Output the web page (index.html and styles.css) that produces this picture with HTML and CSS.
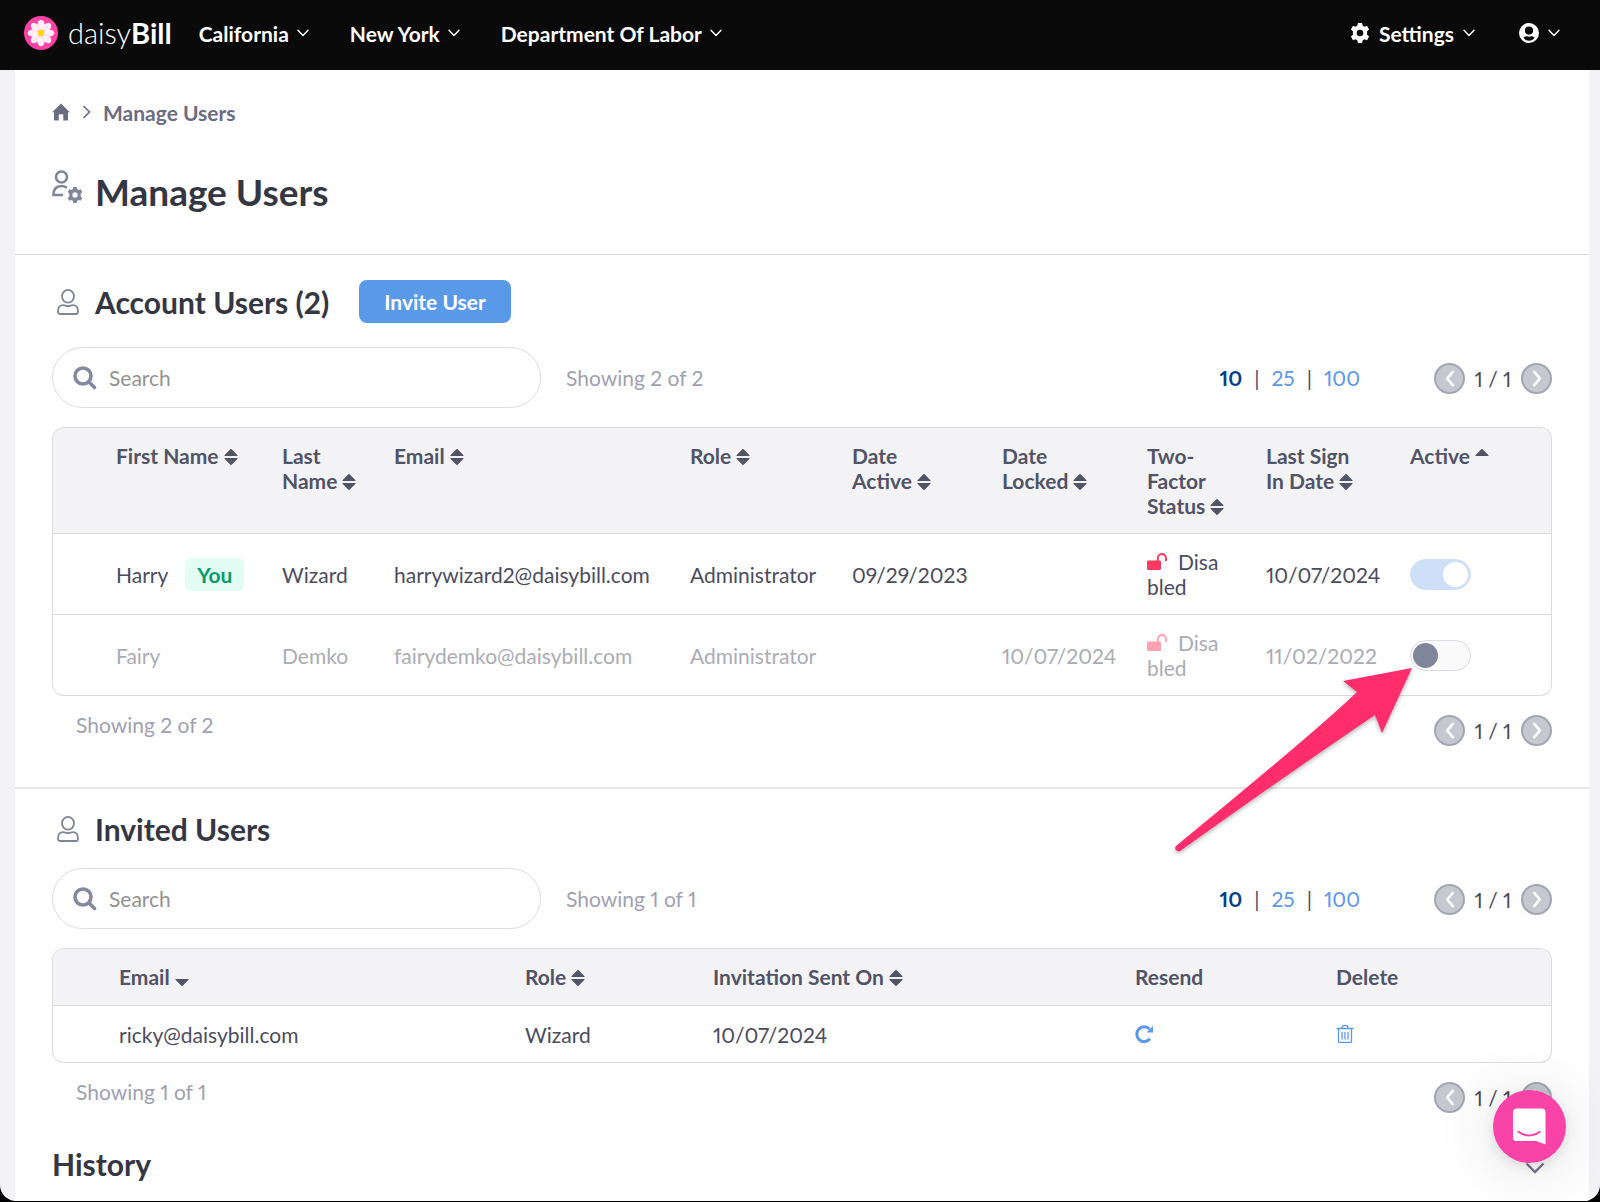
FILE: index.html
```html
<!DOCTYPE html>
<html lang="en">
<head>
<meta charset="utf-8">
<meta name="viewport" content="width=device-width, initial-scale=1">
<title>Manage Users - daisyBill</title>
<link rel="stylesheet" href="styles.css">
</head>
<body>
<svg class="sprite" aria-hidden="true">
  <symbol id="i-down" viewBox="0 0 12 8"><path d="M1 1.2 6 6.6l5-5.4" fill="none" stroke="currentColor" stroke-width="1.4" stroke-linecap="round" stroke-linejoin="round"/></symbol>
  <symbol id="i-gear" viewBox="0 0 20 20"><path fill="currentColor" fill-rule="evenodd" d="M7.900 0h4.200l.5 2.600 1.900 1.100 2.500-.9 2.100 3.600-2 1.800v3.600l2 1.800-2.100 3.600-2.500-.9-1.900 1.100-.5 2.600H7.900l-.5-2.600-1.900-1.100-2.500.9-2.100-3.600 2-1.800V8.200l-2-1.800L3 2.800l2.500.9 1.900-1.100zM10 6.700a3.300 3.300 0 1 0 0 6.600 3.300 3.300 0 0 0 0-6.600z"/></symbol>
  <symbol id="i-person" viewBox="0 0 22 26"><g fill="none" stroke="currentColor" stroke-width="1.800"><ellipse cx="11" cy="7.300" rx="6" ry="6.400"/><path d="M1 22.500c0-4 2-6.300 5.200-6.300 1.600 0 2.800.9 4.800.9s3.200-.9 4.800-.9c3.200 0 5.200 2.300 5.200 6.300 0 1.600-.6 2.500-1.800 2.500H2.800C1.600 25 1 24.100 1 22.500z"/></g></symbol>
  <symbol id="i-search" viewBox="0 0 24 24"><g fill="none" stroke="currentColor" stroke-width="3.600" stroke-linecap="round"><circle cx="10" cy="10" r="8"/><path d="m16 16 5.500 5.500"/></g></symbol>
  <symbol id="i-sort" viewBox="0 0 14 18"><path fill="currentColor" stroke="currentColor" stroke-linejoin="round" d="M7 1.200 13.200 7.500H.8zM7 16.800.8 10.500h12.400z"/></symbol>
  <symbol id="i-sort-up" viewBox="0 0 14 18"><path fill="currentColor" stroke="currentColor" stroke-linejoin="round" d="M7 1.200 13.200 7.500H.8z"/></symbol>
  <symbol id="i-sort-down" viewBox="0 0 14 18"><path fill="currentColor" stroke="currentColor" stroke-linejoin="round" d="M7 16.800.8 10.500h12.400z"/></symbol>
  <symbol id="i-prev" viewBox="0 0 12 18"><path d="M9 2 3 9l6 7" fill="none" stroke="currentColor" stroke-width="2.800" stroke-linecap="round" stroke-linejoin="round"/></symbol>
  <symbol id="i-next" viewBox="0 0 12 18"><path d="m3 2 6 7-6 7" fill="none" stroke="currentColor" stroke-width="2.800" stroke-linecap="round" stroke-linejoin="round"/></symbol>
  <symbol id="i-unlock" viewBox="0 0 20 17"><rect y="7.500" width="14" height="9.500" rx="1.200" fill="currentColor"/><path d="M10.800 8V5.200a4.100 4.100 0 0 1 8.200 0V8" fill="none" stroke="currentColor" stroke-width="2"/></symbol>
</svg>
<div class="page">
  <header class="topbar">
    <a class="brand" href="#">
      <svg class="brand-mark" viewBox="0 0 34 34" aria-hidden="true">
        <circle cx="17" cy="17" r="17" fill="#ff42a5"/>
        <g fill="#fff0fa">
          <g id="petals"><ellipse cx="17" cy="9" rx="3.600" ry="5.300"/><ellipse cx="17" cy="25" rx="3.600" ry="5.300"/><ellipse cx="9" cy="17" rx="5.300" ry="3.600"/><ellipse cx="25" cy="17" rx="5.300" ry="3.600"/></g>
          <use href="#petals" transform="rotate(45 17 17)"/>
        </g>
        <g stroke="#ffc4e5" stroke-width=".8"><path d="m15.500 13.500-2-5M20 15l3-5M20.500 18.500l5 2M18 20.500l2 5M14 19.500l-3 4.500M13.500 15.500l-5-2"/></g>
        <circle cx="17" cy="17" r="3.200" fill="#ffd60a"/>
      </svg>
      <span class="brand-name">daisy<b>Bill</b></span>
    </a>
    <nav class="menu" aria-label="Main">
      <button type="button" class="menu-item">California <svg class="caret"><use href="#i-down"/></svg></button>
      <button type="button" class="menu-item">New York <svg class="caret"><use href="#i-down"/></svg></button>
      <button type="button" class="menu-item">Department Of Labor <svg class="caret"><use href="#i-down"/></svg></button>
    </nav>
    <div class="menu menu-end">
      <button type="button" class="menu-item"><svg class="menu-icon"><use href="#i-gear"/></svg> Settings <svg class="caret"><use href="#i-down"/></svg></button>
      <button type="button" class="menu-item" aria-label="Profile"><svg class="menu-icon" viewBox="0 0 20 20"><path fill="currentColor" fill-rule="evenodd" d="M10 0a10 10 0 1 1 0 20 10 10 0 0 1 0-20zm0 3.500a4.100 4.100 0 1 0 0 8.200 4.100 4.100 0 0 0 0-8.200zM4.400 14.700c1.300 1.900 3.300 3 5.600 3s4.300-1.100 5.600-3c-1.300-1-2.600-1.500-3.400-1.400-1.500.5-2.900.5-4.400 0-.8-.1-2.100.4-3.400 1.400z"/></svg><svg class="caret"><use href="#i-down"/></svg></button>
    </div>
  </header>

  <main class="sheet">
    <div class="intro">
      <nav class="crumbs" aria-label="Breadcrumb">
        <a href="#" aria-label="Home"><svg class="home" viewBox="0 0 18 18"><path fill="currentColor" d="M9 .5 17.800 9.200H16v7.300c0 .6-.4 1-1 1h-3.700v-5.200c0-.6-.4-1-1-1H7.700c-.6 0-1 .4-1 1v5.200H3c-.6 0-1-.4-1-1V9.200H.2z"/></svg></a>
        <svg class="crumb-sep" viewBox="0 0 9 14"><path d="m1.500 1 6 6-6 6" fill="none" stroke="currentColor" stroke-width="1.600"/></svg>
        <a href="#">Manage Users</a>
      </nav>
      <h1 class="title">
        <svg class="title-icon" viewBox="0 0 31 33" aria-hidden="true"><g fill="none" stroke="currentColor" stroke-width="2.600" stroke-linecap="round"><circle cx="9.500" cy="7" r="5.500"/><path d="M10 25H1.500c0-6 3-9 8-9 2 0 3.500.5 4.500 1.300"/></g><svg x="15" y="17" width="16" height="16"><use href="#i-gear"/></svg></svg>
        Manage Users
      </h1>
    </div>

    <section class="block block-ruled">
      <div class="heading">
        <svg class="person" aria-hidden="true"><use href="#i-person"/></svg>
        <h2>Account Users (2)</h2>
        <button type="button" class="invite">Invite User</button>
      </div>
      <div class="tools">
        <label class="search"><svg class="search-icon" aria-hidden="true"><use href="#i-search"/></svg><input type="search" placeholder="Search" aria-label="Search account users"></label>
        <span class="count">Showing 2 of 2</span>
        <div class="sizes"><a href="#" class="current">10</a><span>|</span><a href="#">25</a><span>|</span><a href="#">100</a></div>
        <div class="pager"><button type="button" aria-label="Previous page"><svg><use href="#i-prev"/></svg></button><span>1 / 1</span><button type="button" aria-label="Next page"><svg><use href="#i-next"/></svg></button></div>
      </div>
      <table class="grid accounts">
        <colgroup><col class="c-first"><col class="c-last"><col class="c-email"><col class="c-role"><col class="c-active"><col class="c-locked"><col class="c-factor"><col class="c-sign"><col></colgroup>
        <thead>
          <tr>
            <th scope="col"><button type="button">First Name <svg><use href="#i-sort"/></svg></button></th>
            <th scope="col"><button type="button">Last Name <svg><use href="#i-sort"/></svg></button></th>
            <th scope="col"><button type="button">Email <svg><use href="#i-sort"/></svg></button></th>
            <th scope="col"><button type="button">Role <svg><use href="#i-sort"/></svg></button></th>
            <th scope="col" class="date"><button type="button">Date Active <svg><use href="#i-sort"/></svg></button></th>
            <th scope="col" class="date"><button type="button">Date Locked <svg><use href="#i-sort"/></svg></button></th>
            <th scope="col"><button type="button">Two-Factor Status <svg><use href="#i-sort"/></svg></button></th>
            <th scope="col" class="date"><button type="button">Last Sign In Date <svg><use href="#i-sort"/></svg></button></th>
            <th scope="col"><button type="button">Active <svg><use href="#i-sort-up"/></svg></button></th>
          </tr>
        </thead>
        <tbody>
          <tr>
            <td>Harry <span class="you">You</span></td>
            <td>Wizard</td>
            <td>harrywizard2@daisybill.com</td>
            <td>Administrator</td>
            <td>09/29/2023</td>
            <td></td>
            <td class="factor"><svg class="unlock"><use href="#i-unlock"/></svg>Disabled</td>
            <td>10/07/2024</td>
            <td><input type="checkbox" class="switch" aria-label="Harry Wizard active" checked disabled></td>
          </tr>
          <tr class="inactive">
            <td>Fairy</td>
            <td>Demko</td>
            <td>fairydemko@daisybill.com</td>
            <td>Administrator</td>
            <td></td>
            <td>10/07/2024</td>
            <td class="factor"><svg class="unlock"><use href="#i-unlock"/></svg>Disabled</td>
            <td>11/02/2022</td>
            <td>
              <div class="pointed">
                <input type="checkbox" class="switch" aria-label="Fairy Demko active">
                <svg class="arrow" viewBox="0 0 250 200" aria-hidden="true"><path fill="#ff2d6b" d="M242 8 173 21l14 11Q150 68 6 186c-2 3 0 6 4 5Q125 109 205 55l7 18z"/></svg>
              </div>
            </td>
          </tr>
        </tbody>
      </table>
      <div class="tail">
        <span class="count">Showing 2 of 2</span>
        <div class="pager"><button type="button" aria-label="Previous page"><svg><use href="#i-prev"/></svg></button><span>1 / 1</span><button type="button" aria-label="Next page"><svg><use href="#i-next"/></svg></button></div>
      </div>
    </section>

    <section class="block">
      <div class="heading">
        <svg class="person" aria-hidden="true"><use href="#i-person"/></svg>
        <h2>Invited Users</h2>
      </div>
      <div class="tools">
        <label class="search"><svg class="search-icon" aria-hidden="true"><use href="#i-search"/></svg><input type="search" placeholder="Search" aria-label="Search invited users"></label>
        <span class="count">Showing 1 of 1</span>
        <div class="sizes"><a href="#" class="current">10</a><span>|</span><a href="#">25</a><span>|</span><a href="#">100</a></div>
        <div class="pager"><button type="button" aria-label="Previous page"><svg><use href="#i-prev"/></svg></button><span>1 / 1</span><button type="button" aria-label="Next page"><svg><use href="#i-next"/></svg></button></div>
      </div>
      <table class="grid invited">
        <colgroup><col class="c-mail"><col class="c-kind"><col class="c-sent"><col class="c-resend"><col></colgroup>
        <thead>
          <tr>
            <th scope="col"><button type="button">Email <svg><use href="#i-sort-down"/></svg></button></th>
            <th scope="col"><button type="button">Role <svg><use href="#i-sort"/></svg></button></th>
            <th scope="col"><button type="button">Invitation Sent On <svg><use href="#i-sort"/></svg></button></th>
            <th scope="col">Resend</th>
            <th scope="col">Delete</th>
          </tr>
        </thead>
        <tbody>
          <tr>
            <td>ricky@daisybill.com</td>
            <td>Wizard</td>
            <td>10/07/2024</td>
            <td><button type="button" class="action" aria-label="Resend invitation"><svg viewBox="0 0 18 18"><path d="M15 13.800A7.400 7.400 0 1 1 14.500 4" fill="none" stroke="currentColor" stroke-width="3"/><path fill="currentColor" d="M18 .8v6.700h-6.500z"/></svg></button></td>
            <td><button type="button" class="action" aria-label="Delete invitation"><svg viewBox="0 0 18 18"><g fill="none" stroke="currentColor" stroke-width="1.300"><path d="M.5 3.500h17M2.500 3.500v12.700c0 .8.500 1.200 1.200 1.200h10.600c.7 0 1.200-.4 1.200-1.200V3.500M5.700 3.300l.9-2.200c.1-.3.300-.4.600-.4h3.600c.3 0 .5.100.6.400l.9 2.200M6 7v7.500M9 7v7.500M12 7v7.500"/></g></svg></button></td>
          </tr>
        </tbody>
      </table>
      <div class="tail">
        <span class="count">Showing 1 of 1</span>
        <div class="pager"><button type="button" aria-label="Previous page"><svg><use href="#i-prev"/></svg></button><span>1 / 1</span><button type="button" aria-label="Next page"><svg><use href="#i-next"/></svg></button></div>
      </div>
    </section>

    <section class="history">
      <h2>History</h2>
      <button type="button" class="expand" aria-label="Show history"><svg viewBox="0 0 20 12"><path d="m1.500 1.500 8.500 8.500 8.500-8.500" fill="none" stroke="currentColor" stroke-width="2.400"/></svg></button>
    </section>
  </main>
  <button type="button" class="chat" aria-label="Open chat"><svg viewBox="0 0 34 38"><path fill="#fff" d="M4 .5h25.500a4 4 0 0 1 4 4V37.500L24 34H4a4 4 0 0 1-4-4V4.500a4 4 0 0 1 4-4z"/><path d="M5.500 24.500c6.500 5 15.500 5 22 0" fill="none" stroke="#f943a8" stroke-width="2" stroke-linecap="round"/></svg></button>
</div>
</body>
</html>
```
FILE: styles.css
```css
* { box-sizing: border-box; }

html { background: #000; }

body {
  margin: 0;
  font-family: Lato, "Liberation Sans", sans-serif;
  font-size: 21px;
  line-height: 25px;
  font-variant-numeric: proportional-nums;
  color: #4b4c5e;
}

button {
  padding: 0;
  border: 0;
  background: none;
  font: inherit;
  color: inherit;
  cursor: pointer;
}

a { color: inherit; text-decoration: none; }
svg { flex: none; }

h1, h2 { margin: 0; color: #343642; font-weight: 700; }
h2 { font-size: 30px; line-height: 30px; }

.sprite { position: absolute; width: 0; height: 0; }

.page {
  position: relative;
  background: #f3f3f6;
  border-radius: 0 0 16px 16px;
  overflow: hidden;
}

/* Top bar */
.topbar {
  display: flex;
  align-items: center;
  height: 70px;
  padding: 0 40px 4px 24px;
  background: #0a0a0a;
  color: #fff;
}

.brand { display: flex; align-items: center; gap: 10px; margin-right: 27px; }
.brand-mark { width: 34px; height: 34px; }
.brand-name { font-size: 29px; line-height: 34px; font-weight: 300; }
.brand-name b { font-weight: 700; }

.menu { display: flex; gap: 41px; }
.menu-end { margin-left: auto; gap: 44px; }
.menu-item { display: flex; align-items: center; gap: 8px; font-weight: 700; white-space: nowrap; }
.menu-end .menu-item { gap: 9px; }
.menu-icon { width: 20px; height: 20px; }
.caret { width: 12px; height: 8px; }

/* Page sheet */
.sheet { margin: 0 11px 0 15px; background: #fff; }

.intro { padding: 29px 37px 40px; border-bottom: 1px solid #d5d6df; }

.crumbs {
  display: flex;
  align-items: center;
  gap: 12px;
  height: 26px;
  color: #6b6c82;
  font-weight: 700;
}
.home { display: block; width: 18px; height: 18px; }
.crumb-sep { width: 9px; height: 14px; }

.title {
  display: flex;
  gap: 12px;
  margin-top: 45px;
  font-size: 37px;
  line-height: 44px;
}
.title-icon { width: 31px; height: 33px; color: #81859a; }

.block { padding: 25px 37px 0; }
.block-ruled { padding-bottom: 41px; border-bottom: 2px solid #e5e5eb; }

.heading { display: flex; align-items: center; margin-bottom: 24px; }
.person { width: 22px; height: 26px; margin: 0 16px 0 5px; color: #81859a; }

.invite {
  height: 43px;
  margin-left: 30px;
  padding: 0 25px;
  border-radius: 8px;
  background: #5899e8;
  color: #fff;
  font-weight: 700;
}

.tools { display: flex; align-items: center; margin-bottom: 19px; }

.search {
  display: flex;
  align-items: center;
  gap: 12px;
  width: 489px;
  height: 61px;
  padding: 0 20px;
  border: 1px solid #dcdde4;
  border-radius: 31px;
}
.search-icon { width: 24px; height: 24px; color: #8589a0; }
.search input {
  flex: 1;
  min-width: 0;
  padding: 0;
  border: 0;
  outline: 0;
  background: none;
  font: inherit;
  color: inherit;
}
.search input::placeholder { color: #929292; opacity: 1; }

.count { color: #a0a1b2; }
.tools .count { margin-left: 25px; }

.sizes { display: flex; gap: 12px; margin: 0 74px 0 auto; }
.sizes a { color: #5c98e8; }
.sizes .current { color: #063f87; font-weight: 700; }

.pager { display: flex; align-items: center; }
.pager span { min-width: 56px; text-align: center; }
.pager button {
  display: grid;
  place-items: center;
  width: 31px;
  height: 31px;
  border: 2px solid #a3a5b3;
  border-radius: 50%;
  background: #c5c8cf;
  color: #fff;
}
.pager svg { width: 12px; height: 17px; }
.tools .pager { margin-top: 2px; }

.tail { display: flex; justify-content: space-between; padding: 16px 0 0 24px; }
.tail .pager { margin-top: 3px; }

/* Tables */
.grid {
  width: 100%;
  table-layout: fixed;
  border: 1px solid #dadbe2;
  border-bottom: 0;
  border-collapse: separate;
  border-spacing: 0;
  border-radius: 12px;
}
.grid th, .grid td { padding: 15px 0; border-bottom: 1px solid #dadbe2; text-align: left; }
.grid th {
  padding-right: 32px;
  background: #f3f3f6;
  color: #515366;
  font-weight: 700;
  vertical-align: top;
}
.grid .date { padding-right: 44px; }
.grid td { white-space: nowrap; }
.grid th:first-child { border-top-left-radius: 11px; }
.grid th:last-child { border-top-right-radius: 11px; }
.grid tr:last-child td:first-child { border-bottom-left-radius: 11px; }
.grid tr:last-child td:last-child { border-bottom-right-radius: 11px; }
.grid th button { display: block; text-align: left; }
.grid th svg { width: 14px; height: 18px; vertical-align: -2px; }

.accounts th:first-child, .accounts td:first-child { padding-left: 63px; }
.accounts td { height: 81px; }
.c-first { width: 229px; }
.c-last { width: 112px; }
.c-email { width: 296px; }
.c-role { width: 162px; }
.c-active { width: 150px; }
.c-locked { width: 145px; }
.c-factor { width: 119px; }
.c-sign { width: 144px; }

.invited th, .invited td { height: 57px; }
.invited th:first-child, .invited td:first-child { padding-left: 66px; }
.c-mail { width: 472px; }
.c-kind { width: 188px; }
.c-sent { width: 422px; }
.c-resend { width: 201px; }

.inactive { color: #abacb6; }

.you {
  display: inline-block;
  margin-left: 12px;
  padding: 4px 12px;
  border-radius: 6px;
  background: #e1fdf4;
  color: #0c9a6c;
  font-weight: 700;
}

.grid .factor { padding-right: 40px; white-space: normal; word-break: break-all; }
.unlock { width: 20px; height: 17px; margin-right: 11px; color: #fa3a60; }
.inactive .unlock { color: #ffa3b2; }

.switch {
  appearance: none;
  display: block;
  width: 61px;
  height: 31px;
  margin: 0;
  padding: 2px;
  border: 1px solid #dadbe2;
  border-radius: 16px;
  background: #fafafb;
}
.switch::before {
  content: "";
  display: block;
  width: 25px;
  height: 25px;
  border-radius: 50%;
  background: #81859a;
}
.switch:checked { border-color: #cde0f8; background: #cde0f8; }
.switch:checked::before { margin-left: auto; background: #fff; }

.pointed { position: relative; }
.arrow {
  position: absolute;
  top: 20px;
  left: -240px;
  width: 250px;
  height: 200px;
  filter: drop-shadow(0 2px 2px rgba(0, 0, 0, .3));
  pointer-events: none;
}

.action { display: block; color: #5c98e8; }
.action svg { display: block; width: 18px; height: 18px; }

.history {
  display: flex;
  align-items: flex-end;
  justify-content: space-between;
  padding: 36px 44px 22px 37px;
}
.expand { padding-bottom: 5px; color: #737689; }
.expand svg { display: block; width: 20px; height: 12px; }

.chat {
  position: absolute;
  right: 34px;
  bottom: 38px;
  display: grid;
  place-items: center;
  width: 73px;
  height: 73px;
  border-radius: 50%;
  background: #f943a8;
  box-shadow: 0 4px 12px rgba(0, 0, 0, .1), 0 4px 64px rgba(0, 0, 0, .14);
}
.chat svg { width: 33px; height: 37px; }
```
